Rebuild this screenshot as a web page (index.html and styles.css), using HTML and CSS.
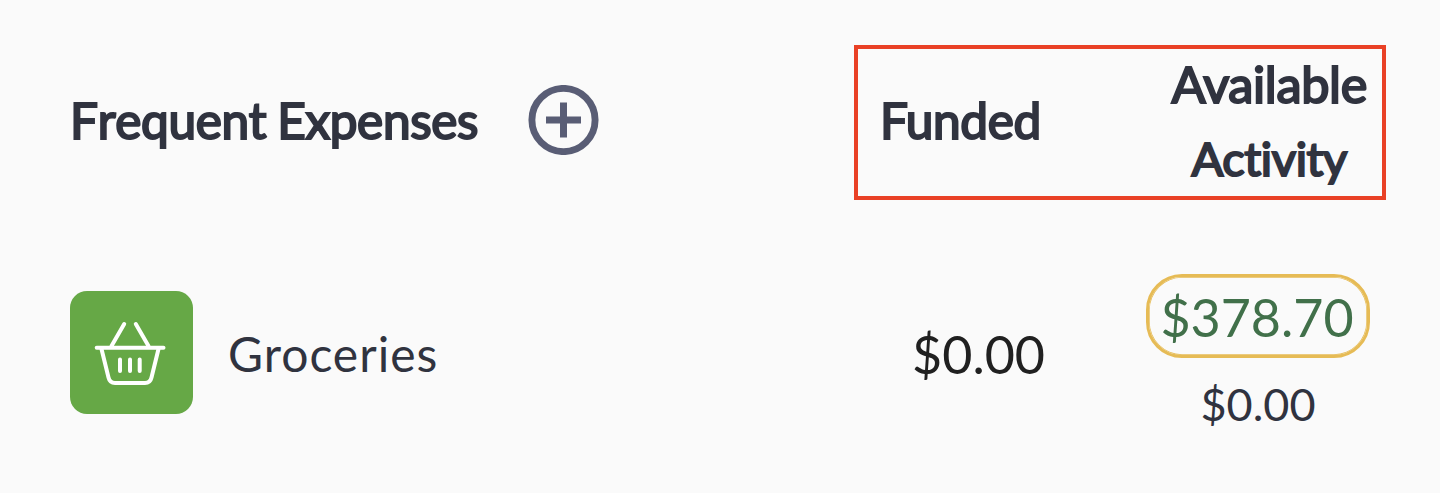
FILE: index.html
```html
<!DOCTYPE html>
<html lang="en">
<head>
    <meta charset="utf-8">
    <title>Frequent Expenses</title>
    <link rel="stylesheet" href="styles.css">
</head>
<body>
    <div class="header">
        <h2 class="title">Frequent Expenses</h2>
        <button class="add" aria-label="Add expense">
            <svg width="71" height="70" viewBox="0 0 71 70">
                <circle cx="35.5" cy="35" r="31.6" fill="none" stroke="#595d75" stroke-width="6.9"/>
                <path d="M35.5 17.5v35M18 35h35" stroke="#595d75" stroke-width="7"/>
            </svg>
        </button>
        <div class="columns">
            <div class="funded-label">Funded</div>
            <div class="balance-labels">
                <div class="available-label">Available</div>
                <div class="activity-label">Activity</div>
            </div>
        </div>
    </div>
    <div class="row">
        <div class="category-icon">
            <svg width="123" height="123" viewBox="0 0 123 123" fill="none" stroke="#fff" stroke-width="4" stroke-linecap="round" stroke-linejoin="round">
                <path d="M26.7 56.8H93.5"/>
                <path d="M41.5 55L54.2 33M78.5 55L65.8 33"/>
                <path d="M31.5 58L38.5 86.5Q39.8 92 45 92H75Q80.2 92 81.5 86.5L88.5 58"/>
                <path d="M50 68.5V80M60 68.5V80M69.7 68.5V80"/>
            </svg>
        </div>
        <div class="category">Groceries</div>
        <div class="funded">$0.00</div>
        <div class="balance">
            <div class="available">$378.70</div>
            <div class="activity">$0.00</div>
        </div>
    </div>
</body>
</html>
```

FILE: styles.css
```css
body{
    margin: 0;
    padding: 45px 54px 0 70px;
    background-color: #fafafa;
    color: #30333f;
    font-family: Lato, "Liberation Sans", sans-serif;
}
.header{
    display: flex;
    align-items: center;
    height: 155px;
}
.title, .columns{
    font-size: 49.5px;
    font-weight: 400;
    letter-spacing: -0.35px;
    -webkit-text-stroke: 2.1px #30333f;
}
.title{
    margin: 0 0 5px;
    width: 458px;
    font-kerning: none;
    word-spacing: -1.3px;
    line-height: 70px;
    white-space: nowrap;
}
.add{
    padding: 0;
    margin-bottom: 5px;
    border: none;
    background: none;
    height: 70px;
    cursor: pointer;
}
.columns{
    box-sizing: border-box;
    display: flex;
    align-items: center;
    justify-content: space-between;
    width: 532px;
    height: 155px;
    margin-left: auto;
    padding: 0 15px 0 22px;
    border: 4px solid #e94025;
}
.funded-label{
    line-height: 70px;
    padding-bottom: 5px;
}
.balance-labels{
    text-align: center;
    line-height: 74px;
    padding-bottom: 3px;
}
.available-label{
    font-size: 50.5px;
}
.activity-label{
    font-size: 47px;
}
.row{
    display: flex;
    align-items: center;
    margin-top: 74px;
    height: 157px;
}
.category-icon{
    width: 123px;
    height: 123px;
    border-radius: 17px;
    background-color: #66a846;
}
.category{
    margin-left: 35px;
    padding-top: 2px;
    font-size: 48px;
    letter-spacing: 1px;
}
.funded{
    margin-left: auto;
    margin-right: 101px;
    padding-top: 2px;
    font-size: 52px;
    color: #202020;
}
.balance{
    width: 224px;
    margin-right: 16px;
    text-align: center;
}
.available{
    box-sizing: border-box;
    height: 84px;
    line-height: 80px;
    padding-right: 2px;
    border: 3px solid #e6bb55;
    border-radius: 36px;
    box-shadow: inset 0 0 0 0.7px #e6bb55;
    font-size: 52px;
    color: #41704a;
}
.activity{
    margin-top: 19px;
    font-size: 45px;
    line-height: 54px;
}
```
